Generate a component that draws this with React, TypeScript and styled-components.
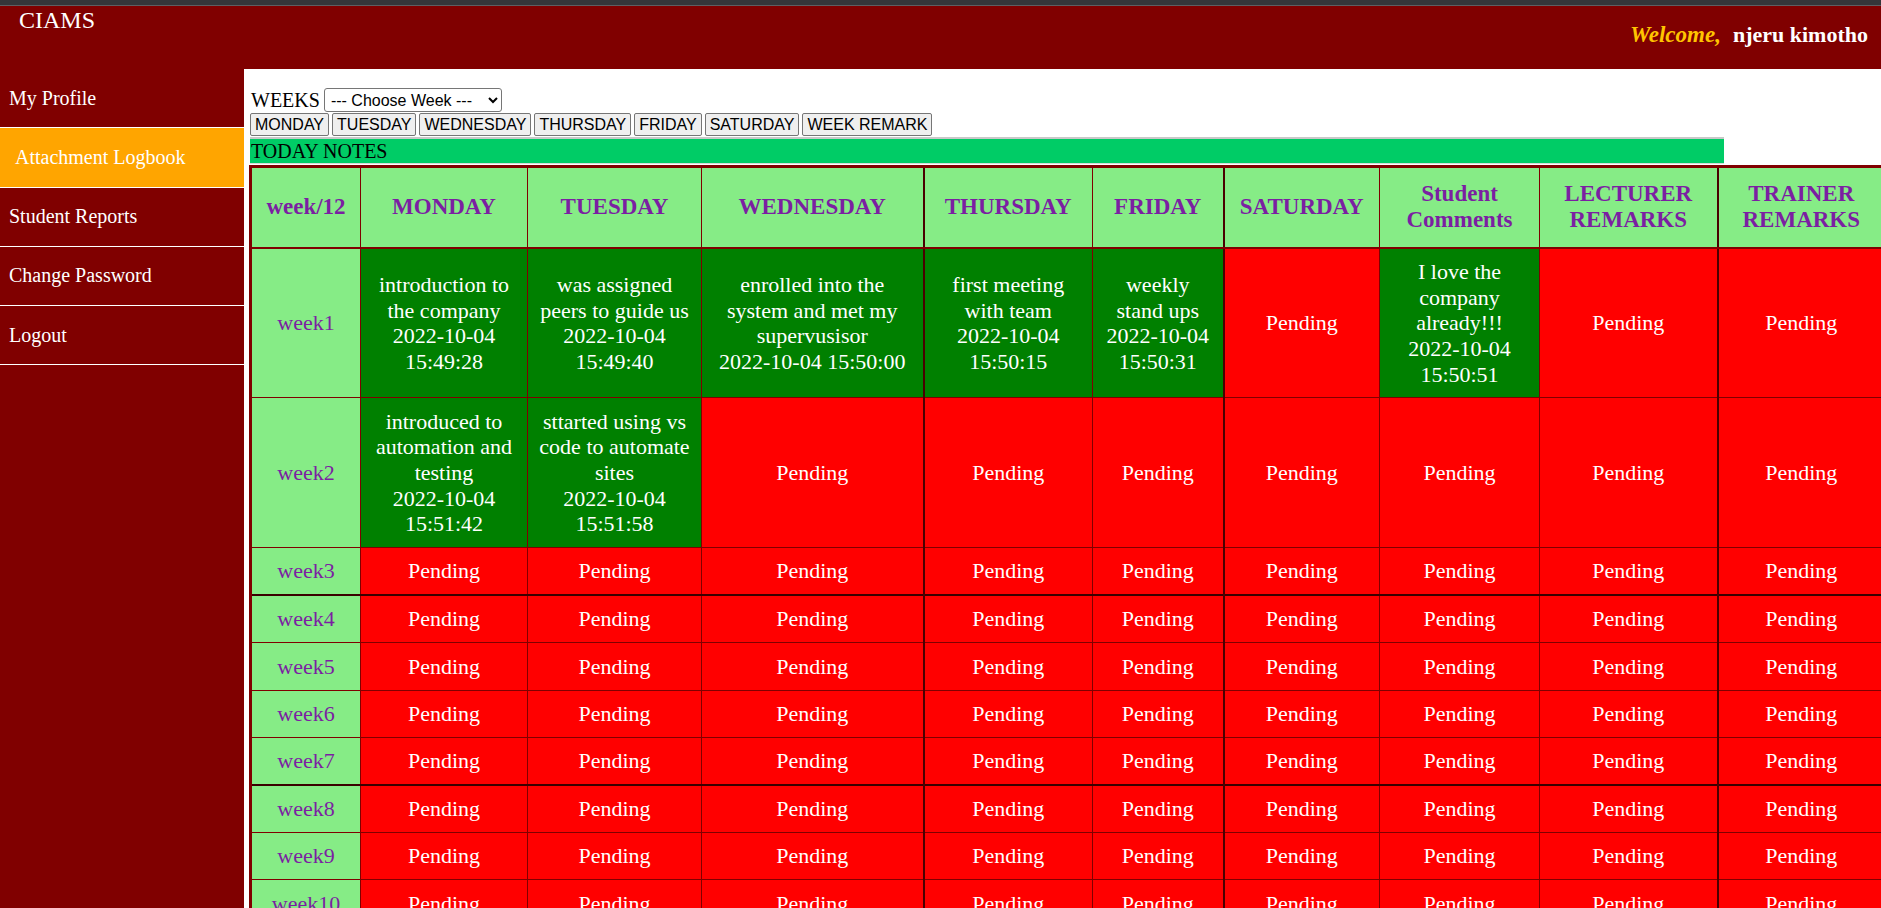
import React from "react";
import styled, { createGlobalStyle } from "styled-components";

const GlobalStyle = createGlobalStyle`
  html, body {
    margin: 0;
    padding: 0;
    overflow: hidden;
    background: #ffffff;
    font-family: "Liberation Serif", "Times New Roman", serif;
  }
  * { box-sizing: border-box; }
`;

const Page = styled.div`
  display: flex;
  flex-direction: column;
  min-height: 100vh;
`;

const TopStrip = styled.div`
  height: 6px;
  background: #35363a;
  border-bottom: 1px solid #5e5f63;
`;

const Header = styled.header`
  height: 63px;
  background: #800000;
  display: flex;
  justify-content: space-between;
  align-items: flex-start;
`;

const Brand = styled.div`
  color: #ffffff;
  font-size: 24px;
  line-height: 27px;
  padding-left: 19px;
  margin-top: 1px;
`;

const Welcome = styled.div`
  margin-top: 16px;
  padding-right: 13px;
  display: flex;
  gap: 12px;
  font-size: 22px;
  font-weight: bold;
  line-height: 25px;
`;

const WelcomeWord = styled.span`
  color: #ffc400;
  font-style: italic;
  font-size: 23px;
`;

const UserName = styled.span`
  color: #ffffff;
`;

const Body = styled.div`
  display: flex;
  flex: 1;
`;

const Sidebar = styled.nav`
  width: 244px;
  flex-shrink: 0;
  background: #800000;
`;

const NavItem = styled.div<{ $active?: boolean }>`
  height: 59.25px;
  display: flex;
  align-items: center;
  padding-left: ${(p) => (p.$active ? "15px" : "9px")};
  border-bottom: 1px solid #ffffff;
  background: ${(p) => (p.$active ? "#ffa500" : "transparent")};
  color: #ffffff;
  font-size: 20px;
`;

const Main = styled.main`
  flex: 1;
  min-width: 0;
  background: #ffffff;
  padding: 19px 0 0 6px;
`;

const WeekRow = styled.div`
  display: flex;
  align-items: center;
  gap: 4px;
  height: 24px;
`;

const Label = styled.span`
  font-size: 20px;
  color: #000000;
  padding-left: 1px;
`;

const WeekSelect = styled.select`
  width: 178px;
  height: 24px;
  font-family: "Liberation Sans", Arial, sans-serif;
  font-size: 16px;
  color: #000000;
  background: #ffffff;
  border: 1px solid #767676;
  border-radius: 3px;
  padding: 0 2px;
`;

const ButtonRow = styled.div`
  display: flex;
  gap: 3px;
  margin-top: 1px;
`;

const DayButton = styled.button`
  height: 23px;
  padding: 0 4px;
  font-family: "Liberation Sans", Arial, sans-serif;
  font-size: 16px;
  color: #000000;
  background: #efefef;
  border: 1px solid #767676;
  border-radius: 2px;
`;

const NotesBar = styled.div`
  width: 1474px;
  margin-top: 1px;
  border-top: 2px solid #c8c8c8;
  border-bottom: 1px solid #d8d8d8;
  background: #00cc66;
  color: #000000;
  font-size: 20px;
  line-height: 24px;
  padding-left: 1px;
`;

const Table = styled.table`
  margin-top: 1px;
  margin-left: -1px;
  width: 1635px;
  table-layout: fixed;
  border-collapse: collapse;
  border: 3px solid #800000;
`;

const Col = styled.col<{ $w: number }>`
  width: ${(p) => p.$w}px;
`;

const HeadCell = styled.th`
  background: #86ec86;
  color: #7b1fa2;
  font-size: 23px;
  font-weight: bold;
  line-height: 1.15;
  padding: 13px 8px;
  text-align: center;
  border: 1px solid #800000;
  border-bottom: 2px solid #800000;

  &:nth-child(5),
  &:nth-child(7),
  &:nth-child(10) {
    border-left: 2px solid #4a0000;
  }
`;

const Row = styled.tr<{ $thickTop?: boolean }>`
  & > td {
    border-top: ${(p) => (p.$thickTop ? "2px solid #3a0000" : "1px solid #800000")};
  }
`;

const WeekCell = styled.td`
  background: #86ec86;
  color: #7b1fa2;
  font-size: 22px;
  line-height: 25.6px;
  padding: 10.3px 8px;
  text-align: center;
  border: 1px solid #800000;
`;

const Cell = styled.td<{ $done: boolean }>`
  background: ${(p) => (p.$done ? "#008000" : "#ff0000")};
  color: #ffffff;
  font-size: 22px;
  line-height: 25.6px;
  padding: 10.3px 8px;
  text-align: center;
  border: 1px solid #800000;

  &:nth-child(5),
  &:nth-child(7),
  &:nth-child(10) {
    border-left: 2px solid #4a0000;
  }
`;

const Stamp = styled.span`
  display: block;
`;

const NoWrap = styled.span`
  white-space: nowrap;
`;

type Entry = { text: string; date: string; time: string } | null;

const columns = [
  { label: "week/12", w: 110 },
  { label: "MONDAY", w: 167 },
  { label: "TUESDAY", w: 174 },
  { label: "WEDNESDAY", w: 222 },
  { label: "THURSDAY", w: 169 },
  { label: "FRIDAY", w: 131 },
  { label: "SATURDAY", w: 156 },
  { label: "Student Comments", w: 160 },
  { label: "LECTURER REMARKS", w: 178 },
  { label: "TRAINER REMARKS", w: 168 },
];

const D = "2022-10-04";

const entries: Record<number, Entry[]> = {
  1: [
    { text: "introduction to the company", date: D, time: "15:49:28" },
    { text: "was assigned peers to guide us", date: D, time: "15:49:40" },
    { text: "enrolled into the system and met my supervusisor", date: D, time: "15:50:00" },
    { text: "first meeting with team", date: D, time: "15:50:15" },
    { text: "weekly stand ups", date: D, time: "15:50:31" },
    null,
    { text: "I love the company already!!!", date: D, time: "15:50:51" },
    null,
    null,
  ],
  2: [
    { text: "introduced to automation and testing", date: D, time: "15:51:42" },
    { text: "sttarted using vs code to automate sites", date: D, time: "15:51:58" },
    null,
    null,
    null,
    null,
    null,
    null,
    null,
  ],
};

const navItems = [
  "My Profile",
  "Attachment Logbook",
  "Student Reports",
  "Change Password",
  "Logout",
];

const dayButtons = [
  "MONDAY",
  "TUESDAY",
  "WEDNESDAY",
  "THURSDAY",
  "FRIDAY",
  "SATURDAY",
  "WEEK REMARK",
];

export default function App() {
  const weeks = Array.from({ length: 12 }, (_, i) => i + 1);
  return (
    <>
      <GlobalStyle />
      <Page>
        <TopStrip />
        <Header>
          <Brand>CIAMS</Brand>
          <Welcome>
            <WelcomeWord>Welcome,</WelcomeWord>
            <UserName>njeru kimotho</UserName>
          </Welcome>
        </Header>
        <Body>
          <Sidebar>
            {navItems.map((item) => (
              <NavItem key={item} $active={item === "Attachment Logbook"}>
                {item}
              </NavItem>
            ))}
          </Sidebar>
          <Main>
            <WeekRow>
              <Label>WEEKS</Label>
              <WeekSelect defaultValue="">
                <option value="">--- Choose Week ---</option>
              </WeekSelect>
            </WeekRow>
            <ButtonRow>
              {dayButtons.map((d) => (
                <DayButton key={d}>{d}</DayButton>
              ))}
            </ButtonRow>
            <NotesBar>TODAY NOTES</NotesBar>
            <Table>
              <colgroup>
                {columns.map((c) => (
                  <Col key={c.label} $w={c.w} />
                ))}
              </colgroup>
              <thead>
                <tr>
                  {columns.map((c) => (
                    <HeadCell key={c.label}>{c.label}</HeadCell>
                  ))}
                </tr>
              </thead>
              <tbody>
                {weeks.map((w) => {
                  const row: Entry[] = entries[w] ?? Array(9).fill(null);
                  return (
                    <Row key={w} $thickTop={w === 4 || w === 8}>
                      <WeekCell>week{w}</WeekCell>
                      {row.map((e, i) => (
                        <Cell key={i} $done={e !== null}>
                          {e ? (
                            <>
                              {e.text}
                              <Stamp>
                                <NoWrap>{e.date}</NoWrap> <NoWrap>{e.time}</NoWrap>
                              </Stamp>
                            </>
                          ) : (
                            "Pending"
                          )}
                        </Cell>
                      ))}
                    </Row>
                  );
                })}
              </tbody>
            </Table>
          </Main>
        </Body>
      </Page>
    </>
  );
}
